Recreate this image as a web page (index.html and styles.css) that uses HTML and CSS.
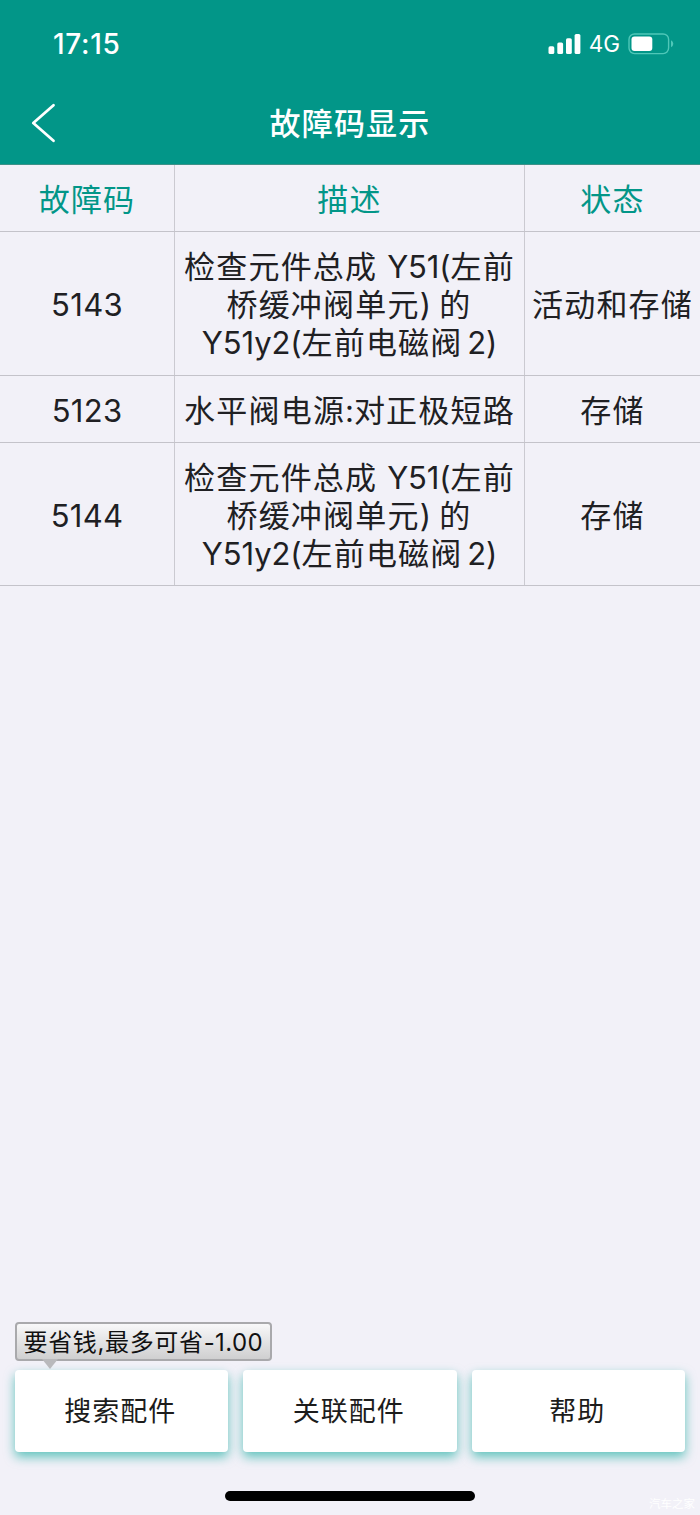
FILE: index.html
```
<!DOCTYPE html>
<html lang="zh-CN">
<head>
<meta charset="utf-8">
<title>故障码显示</title>
<link rel="stylesheet" href="styles.css">
</head>
<body>
<div class="screen">
  <header class="header">
    <div class="status">
      <span class="time">17:15</span>
      <div class="status-right">
        <svg class="signal" width="33" height="20" viewBox="0 0 33 20" fill="#fff">
          <rect x="0.5" y="12.3" width="5.8" height="7.7" rx="1.6"/>
          <rect x="9.3" y="8.5" width="5.8" height="11.5" rx="1.6"/>
          <rect x="18" y="4.2" width="5.8" height="15.8" rx="1.6"/>
          <rect x="26.6" y="0" width="5.8" height="20" rx="1.6"/>
        </svg>
        <span class="network">4G</span>
        <svg class="battery" width="46" height="22" viewBox="0 0 46 22">
          <rect x="1" y="1" width="39.6" height="19.6" rx="5.5" fill="none" stroke="#4fc7b8" stroke-width="1.4"/>
          <rect x="3.5" y="3.6" width="20.8" height="14.4" rx="3" fill="#fff"/>
          <path d="M43 7.3Q45.3 8.5 45.3 10.8T43 14.3Z" fill="#4fc7b8"/>
        </svg>
      </div>
    </div>
    <div class="navbar">
      <svg class="back" width="26" height="42" viewBox="0 0 26 42" fill="none" stroke="#fff" stroke-width="2.8" stroke-linecap="round" stroke-linejoin="round"><path d="M22.5 3.2L2.3 21L22.5 38.8"/></svg>
      <h1 class="title">故障码显示</h1>
    </div>
  </header>
  <main class="content">
    <div class="table">
      <div class="row head"><div class="cell">故障码</div><div class="cell">描述</div><div class="cell">状态</div></div>
      <div class="row tall">
        <div class="cell code">5143</div>
        <div class="cell desc"><span>检查元件总成 <b>Y51(</b>左前</span><span class="middle">桥缓冲阀单元<b>)</b> 的</span><span><b>Y51y2(</b>左前电磁阀<b class="narrow"> 2)</b></span></div>
        <div class="cell">活动和存储</div>
      </div>
      <div class="row">
        <div class="cell code">5123</div>
        <div class="cell desc"><span>水平阀电源<b>:</b>对正极短路</span></div>
        <div class="cell">存储</div>
      </div>
      <div class="row tall last">
        <div class="cell code">5144</div>
        <div class="cell desc"><span>检查元件总成 <b>Y51(</b>左前</span><span class="middle">桥缓冲阀单元<b>)</b> 的</span><span><b>Y51y2(</b>左前电磁阀<b class="narrow"> 2)</b></span></div>
        <div class="cell">存储</div>
      </div>
    </div>
  </main>
  <footer class="footer">
    <div class="tip">要省钱,最多可省<b>-1.00</b>
      <svg class="tip-arrow" width="18" height="11" viewBox="0 0 18 11"><path d="M1 0L9 10L17 0Z" fill="#b9b9bc"/></svg>
    </div>
    <div class="actions">
      <div class="button">搜索配件</div><div class="button">关联配件</div><div class="button">帮助</div>
    </div>
    <div class="home-row"><div class="home-bar"></div></div>
    <span class="watermark">汽车之家</span>
  </footer>
</div>
</body>
</html>
```
FILE: styles.css
```
* { box-sizing: border-box; }
body { margin: 0; background: #f2f1f8; color: #202023; font-family: Inter, "Noto Sans CJK SC", sans-serif; }
b { font-weight: 400; }
.screen { width: 700px; height: 1515px; display: flex; flex-direction: column; }
.header { height: 165px; background: #029688; color: #fff; border-bottom: 1px solid #3d9188; }
.status { height: 82px; padding: 5px 26px 0 53px; display: flex; align-items: center; justify-content: space-between; }
.time { font-size: 28px; font-weight: 500; letter-spacing: 0.7px; }
.status-right { display: flex; align-items: center; }
.network { font-size: 22.5px; margin: 0 8px 0 8px; }
.navbar { height: 82px; padding: 0 0 0 31px; display: grid; grid-template-columns: 26px 1fr 57px; align-items: center; }
.title { margin: 0; padding-top: 2px; font-size: 31px; letter-spacing: 1.2px; line-height: 46px; font-weight: 500; text-align: center; }
.content { flex: 1; }
.table { font-size: 31px; letter-spacing: 1.2px; line-height: 38px; }
.row { height: 67px; display: grid; grid-template-columns: 175px 350px 175px; border-bottom: 1px solid #c4c3ca; }
.row.tall { height: 144px; }
.row.last { height: 143px; }
.cell { border-right: 1px solid #cbcad1; padding-top: 3px; display: flex; flex-direction: column; align-items: center; justify-content: center; white-space: nowrap; }
.cell:last-child { border-right: 0; }
.tall .desc { padding-top: 2px; }
.last .cell { padding-top: 4px; }
.head { color: #029688; }
.code { letter-spacing: 0.3px; }
.desc b { letter-spacing: -0.1px; }
.desc .narrow { word-spacing: -4px; }
.middle { word-spacing: -1.5px; padding-right: 1px; }
.footer { height: 195px; padding: 2px 15px 0 14.5px; position: relative; }
.tip { position: relative; width: 257px; height: 39px; border: 2px solid #a9a9ac; border-radius: 4px; background: linear-gradient(#f8f8f9, #cfcfd0); color: #111; font-size: 24px; letter-spacing: 0.65px; line-height: 38px; padding-left: 7px; white-space: nowrap; }
.tip b { letter-spacing: 0.4px; }
.tip-arrow { position: absolute; left: 24px; top: 35px; }
.actions { display: grid; grid-template-columns: repeat(3, 1fr); gap: 15px; margin-top: 9px; }
.button { height: 82px; padding: 0 2px 3px 0; display: flex; align-items: center; justify-content: center; background: #fff; border-radius: 4px; box-shadow: 0 5px 11px rgba(2, 165, 150, .6); font-size: 27px; letter-spacing: 1px; color: #1c1c1c; }
.home-row { display: flex; justify-content: center; margin-top: 39px; }
.home-bar { width: 250px; height: 10px; border-radius: 5px; background: #000; }
.watermark { position: absolute; right: 5px; bottom: 3px; font-size: 11.5px; line-height: 16px; color: #fff; }
```
